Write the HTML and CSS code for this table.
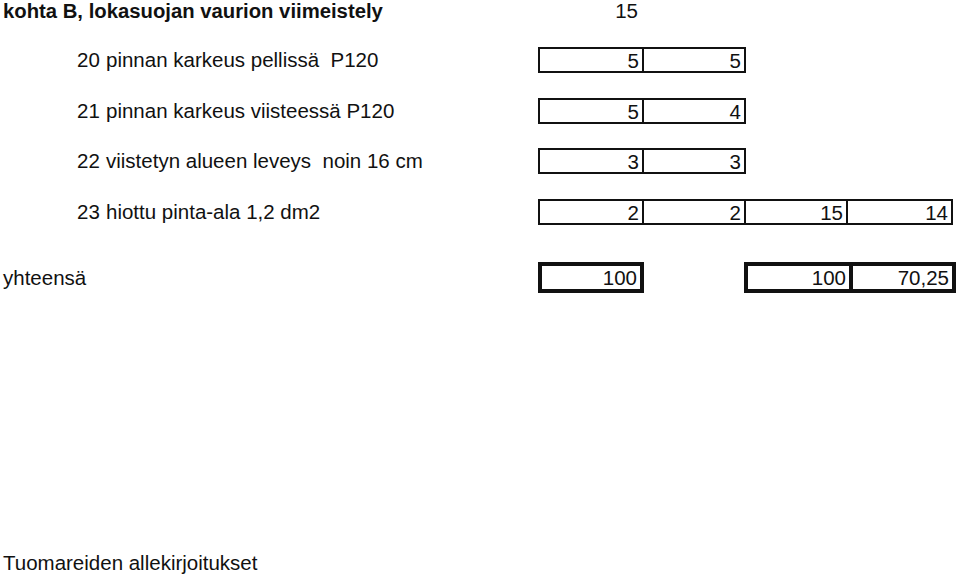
FILE: index.html
```html
<!DOCTYPE html>
<html lang="fi">
<head>
<meta charset="utf-8">
<title>kohta B</title>
<link rel="stylesheet" href="styles.css">
</head>
<body>
<div class="sheet">
  <div class="title-row">
    <div class="title">kohta B, lokasuojan vaurion viimeistely</div>
    <div class="score">15</div>
  </div>

  <div class="row r1">
    <div class="label"><span class="num">20</span><span class="txt">pinnan karkeus pellissä&nbsp; P120</span></div>
    <div class="box"><div class="cell">5</div><div class="cell">5</div></div>
  </div>

  <div class="row r2">
    <div class="label"><span class="num">21</span><span class="txt">pinnan karkeus viisteessä P120</span></div>
    <div class="box"><div class="cell">5</div><div class="cell">4</div></div>
  </div>

  <div class="row r3">
    <div class="label"><span class="num">22</span><span class="txt">viistetyn alueen leveys&nbsp; noin 16 cm</span></div>
    <div class="box"><div class="cell">3</div><div class="cell">3</div></div>
  </div>

  <div class="row r4">
    <div class="label"><span class="num">23</span><span class="txt">hiottu pinta-ala 1,2 dm2</span></div>
    <div class="box"><div class="cell">2</div><div class="cell">2</div><div class="cell">15</div><div class="cell wide">14</div></div>
  </div>

  <div class="row total">
    <div class="label total-label">yhteensä</div>
    <div class="totals">
      <div class="box thick"><div class="cell">100</div></div>
      <div class="box thick second"><div class="cell">100</div><div class="cell wide">70,25</div></div>
    </div>
  </div>

  <div class="footer">Tuomareiden allekirjoitukset</div>
</div>
</body>
</html>
```

FILE: styles.css
```css
html, body {
  margin: 0;
  padding: 0;
  background: #ffffff;
}

.sheet {
  font-family: "Liberation Sans", Arial, sans-serif;
  font-size: 20.5px;
  color: #111111;
  width: 959px;
  height: 578px;
  position: relative;
  padding-left: 3px;
  box-sizing: border-box;
}

.title-row {
  display: grid;
  grid-template-columns: 535px 104px;
  height: 22px;
  line-height: 22px;
}

.title {
  font-weight: bold;
  font-size: 20.3px;
  white-space: nowrap;
}

.score {
  text-align: right;
  padding-right: 4px;
}

.row {
  display: grid;
  grid-template-columns: 535px auto;
  align-items: center;
}

.r1 { margin-top: 25px; }
.r2 { margin-top: 25px; }
.r3 { margin-top: 24px; }
.r4 { margin-top: 25px; }
.total { margin-top: 37px; }

.label {
  display: flex;
  white-space: nowrap;
}

.num {
  padding-left: 74px;
  width: 29px;
}

.box {
  display: flex;
  border: 2px solid #111111;
  height: 26px;
  box-sizing: border-box;
  width: max-content;
}

.cell {
  width: 102px;
  height: 22px;
  line-height: 23px;
  text-align: right;
  padding-right: 3px;
  box-sizing: border-box;
  border-left: 2px solid #111111;
}

.cell:first-child {
  width: 102px;
  border-left: none;
}

.cell.wide {
  width: 105px;
}

.totals {
  display: flex;
  gap: 100px;
}

.box.thick {
  border-width: 4px;
  height: 31px;
}

.box.thick .cell {
  height: 23px;
  line-height: 23px;
  border-left-width: 4px;
}

.box.thick .cell:first-child {
  width: 98px;
}

.box.thick.second .cell:first-child {
  width: 101px;
}

.box.thick.second .cell.wide {
  width: 103px;
}

.footer {
  position: absolute;
  left: 3px;
  top: 552px;
  line-height: 22px;
}
```
